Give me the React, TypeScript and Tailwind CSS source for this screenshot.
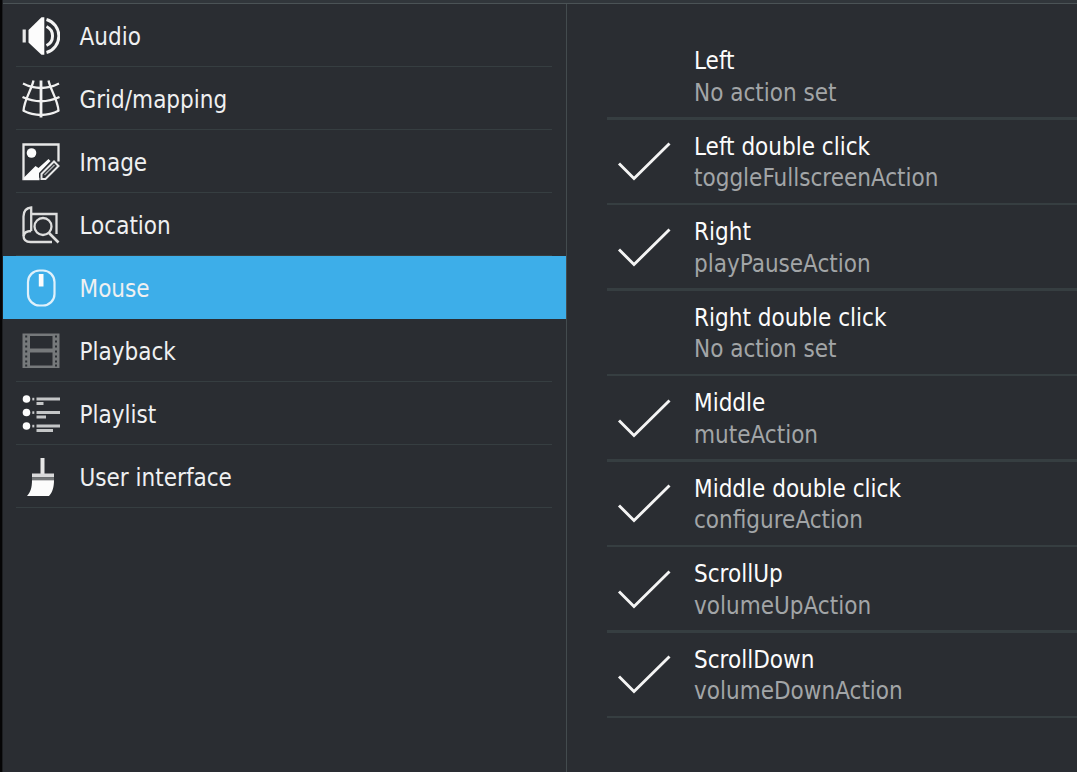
import React from 'react';

const AudioIcon = () => (
  <svg viewBox="0 0 38 38" className="size-[38px]" fill="none" stroke="#f4f4f4">
    <rect x="0.6" y="12.500" width="3.200" height="13" fill="#e8e8e8" stroke="none" />
    <path d="M6.500 13 L19.500 0.300 H22.300 V37.700 H19.500 L6.500 25.500 Z" fill="#fcfcfc" stroke="none" />
    <path d="M24.500 9.500 A10.500 10.500 0 0 1 24.500 28.500" strokeWidth="3" />
    <path d="M24.500 2.500 A17.200 17.200 0 0 1 24.500 35.500" strokeWidth="3" />
  </svg>
);

const GridIcon = () => (
  <svg viewBox="0 0 38 38" className="size-[38px]" fill="none" stroke="#f0f0f0" strokeWidth="2.300">
    <path d="M1 3.500 Q19 12.500 37 3.500" />
    <path d="M0.500 17 Q19 25.500 37.500 17" />
    <path d="M1 30.500 Q19 39.500 37 30.500" />
    <path d="M11.500 0.500 C9.500 10 2 20 1.500 31" />
    <path d="M26.500 0.500 C28.500 10 36 20 36.500 31" />
    <path d="M19 0.500 V37.500" strokeWidth="2.800" />
  </svg>
);

const ImageIcon = () => (
  <svg viewBox="0 0 38 38" className="size-[38px]" fill="none" stroke="#e8e8e8" strokeWidth="2.300">
    <path d="M17.500 36 H1.500 V1.500 H36.500 V18.500" />
    <circle cx="9.500" cy="10" r="4.800" fill="#fcfcfc" stroke="none" />
    <path d="M2 34.500 L13.500 23 L16.500 25 L26.500 16 L28.500 18 L17 30 V37 H2 Z" fill="#fcfcfc" stroke="none" />
    <path d="M19.500 36 V31 L32 18.500 L36.500 23 L23.500 36 Z" strokeWidth="2" />
    <path d="M22.500 32 L32.500 22" strokeWidth="1.500" stroke="#a8aaac" />
  </svg>
);

const LocationIcon = () => (
  <svg viewBox="0 0 38 38" className="size-[38px]" fill="none" stroke="#dedede" strokeWidth="2.300">
    <path d="M9.200 25 V1.500 C4 2 1.500 5.500 1.500 10.500 V29.500 C1.500 34 4 36 8.500 36 H30" />
    <path d="M9.200 25 C5 25 2 26.500 1.800 30" />
    <path d="M9.200 8 H34.500 V28" />
    <circle cx="21" cy="20.500" r="8.500" />
    <path d="M27 27 L36.500 36.500" strokeWidth="2.600" />
  </svg>
);

const MouseIcon = () => (
  <svg viewBox="0 0 38 38" className="size-[38px]" fill="none">
    <rect x="6" y="1.500" width="26.500" height="35" rx="11.500" stroke="#e0f1fb" strokeWidth="2.200" />
    <rect x="16.800" y="5" width="4.700" height="12.500" fill="#fcfcfc" />
  </svg>
);

const PlaybackIcon = () => (
  <svg viewBox="0 0 38 38" className="size-[38px]">
    <path
      fill="#76797b"
      fillRule="evenodd"
      d="M0.500 1.500 H37.500 V36 H0.500 Z M8 4 V16.500 H30.500 V4 Z M8 20.500 V33.500 H30.500 V20.500 Z"
    />
    {[4, 9, 14, 19, 24, 29, 33].map((y) => (
      <g key={y} fill="#2a2e33">
        <rect x="3.200" y={y - 0.5} width="2" height="2" />
        <rect x="33" y={y - 0.5} width="2" height="2" />
      </g>
    ))}
  </svg>
);

const PlaylistIcon = () => (
  <svg viewBox="0 0 38 38" className="size-[38px]">
    {[
      { y: 4, w: 7 },
      { y: 17.5, w: 9.5 },
      { y: 31, w: 16.5 },
    ].map(({ y, w }) => (
      <g key={y}>
        <circle cx="4.500" cy={y} r="3.800" fill="#fcfcfc" />
        <rect x="10.300" y={y - 1.2} width="2" height="2.600" fill="#c8c9ca" />
        <rect x="14.500" y={y - 1.5} width="23.500" height="3" fill="#c4c6c7" />
        <rect x="14.500" y={y + 3} width={w} height="3" fill="#c4c6c7" />
      </g>
    ))}
  </svg>
);

const BrushIcon = () => (
  <svg viewBox="0 0 38 38" className="size-[38px]">
    <rect x="18.500" y="0" width="4" height="16" fill="#e6e6e6" />
    <rect x="10" y="15.500" width="22" height="3.800" fill="#d9dadb" />
    <rect x="10" y="19.300" width="22" height="3" fill="#747779" />
    <path d="M10 22.300 H32 C32 29 30.500 34.500 27 38 H5 C8.500 34.500 10 29.500 10 22.300 Z" fill="#fcfcfc" />
  </svg>
);

const sections = [
  { name: 'Audio', Icon: AudioIcon },
  { name: 'Grid/mapping', Icon: GridIcon },
  { name: 'Image', Icon: ImageIcon },
  { name: 'Location', Icon: LocationIcon },
  { name: 'Mouse', Icon: MouseIcon, selected: true },
  { name: 'Playback', Icon: PlaybackIcon },
  { name: 'Playlist', Icon: PlaylistIcon },
  { name: 'User interface', Icon: BrushIcon },
];

const NONE = 'No action set';

const bindings = [
  { button: 'Left', action: NONE },
  { button: 'Left double click', action: 'toggleFullscreenAction' },
  { button: 'Right', action: 'playPauseAction' },
  { button: 'Right double click', action: NONE },
  { button: 'Middle', action: 'muteAction' },
  { button: 'Middle double click', action: 'configureAction' },
  { button: 'ScrollUp', action: 'volumeUpAction' },
  { button: 'ScrollDown', action: 'volumeDownAction' },
];

export default function App() {
  return (
    <div className="flex h-[772px] w-full overflow-hidden bg-[#2a2d32] font-['DejaVu_Sans_Condensed','DejaVu_Sans',sans-serif] text-[24px] text-[#eff0f1]">
      <div className="w-[3px] shrink-0 border-r border-[#1c1e21] bg-[#050506]" />
      <div className="flex min-w-0 flex-1 flex-col">
        <div className="h-1 shrink-0 border-b border-[#4b5356] bg-[#31363b]" />
        <div className="flex min-h-0 flex-1">
          <nav className="w-[564px] shrink-0 border-r border-[#434b4e]">
            {sections.map(({ name, Icon, selected }) => (
              <div key={name} className={selected ? 'h-[63px] bg-[#3daee9] pr-[14px] pl-[13px]' : 'h-[63px] pr-[14px] pl-[13px]'}>
                <div
                  className={
                    selected
                      ? 'flex h-full items-center gap-[19.5px] pl-[6px]'
                      : 'flex h-full items-center gap-[19.5px] border-b border-[#363e41] pt-px pl-[6px]'
                  }
                >
                  <Icon />
                  <span className="pt-[2px] leading-[30px] whitespace-nowrap">{name}</span>
                </div>
              </div>
            ))}
          </nav>
          <ul className="min-w-0 flex-1 pt-[30px] pl-[40px]">
            {bindings.map(({ button, action }) => (
              <li key={button} className="flex h-[85.5px] flex-col">
                <div className="flex flex-1 items-center pt-[4.5px]">
                  <div className="w-[87px] shrink-0 pl-[10px]">
                    {action !== NONE && (
                      <svg viewBox="0 0 54 42" className="h-[42px] w-[54px]" fill="none" stroke="#f4f4f4" strokeWidth="2.900">
                        <path d="M2 21.500 L17 36.500 L52.500 1.500" />
                      </svg>
                    )}
                  </div>
                  <div className="leading-[31.5px] whitespace-nowrap">
                    <div className="text-[#fcfcfc]">{button}</div>
                    <div className="text-[#a2a5a7]">{action}</div>
                  </div>
                </div>
                <div className="h-[2.5px] shrink-0 bg-[#363e41]" />
              </li>
            ))}
          </ul>
        </div>
      </div>
    </div>
  );
}
